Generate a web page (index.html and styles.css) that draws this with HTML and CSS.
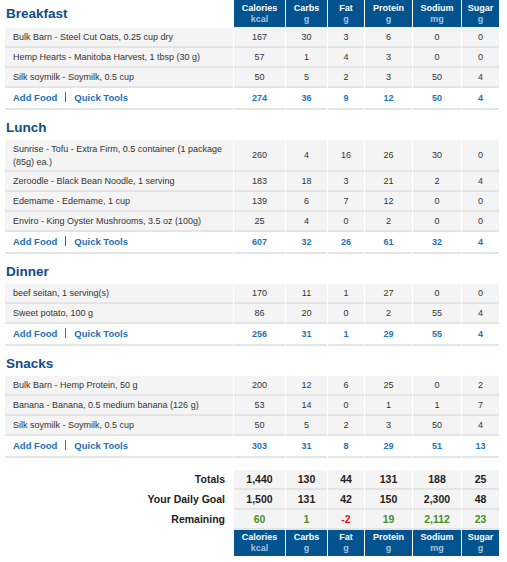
FILE: index.html
```html
<!DOCTYPE html>
<html>
<head>
<meta charset="utf-8">
<link rel="stylesheet" href="styles.css">
</head>
<body>
<table class="diary">
  <colgroup>
    <col class="c-name"><col class="c-cal"><col class="c-carb"><col class="c-fat"><col class="c-pro"><col class="c-sod"><col class="c-sug">
  </colgroup>
  <tbody>
    <tr class="head first">
      <th class="meal">Breakfast</th>
      <th class="col">Calories<span class="unit">kcal</span></th>
      <th class="col">Carbs<span class="unit">g</span></th>
      <th class="col">Fat<span class="unit">g</span></th>
      <th class="col">Protein<span class="unit">g</span></th>
      <th class="col">Sodium<span class="unit">mg</span></th>
      <th class="col">Sugar<span class="unit">g</span></th>
    </tr>
    <tr class="food"><td class="name">Bulk Barn - Steel Cut Oats, 0.25 cup dry</td><td>167</td><td>30</td><td>3</td><td>6</td><td>0</td><td>0</td></tr>
    <tr class="food"><td class="name">Hemp Hearts - Manitoba Harvest, 1 tbsp (30 g)</td><td>57</td><td>1</td><td>4</td><td>3</td><td>0</td><td>0</td></tr>
    <tr class="food"><td class="name">Silk soymilk - Soymilk, 0.5 cup</td><td>50</td><td>5</td><td>2</td><td>3</td><td>50</td><td>4</td></tr>
    <tr class="total"><td class="name"><a class="link">Add Food</a><span class="sep"></span><a class="link">Quick Tools</a></td><td>274</td><td>36</td><td>9</td><td>12</td><td>50</td><td>4</td></tr>

    <tr class="gap"><td colspan="7"></td></tr>
    <tr class="head">
      <th class="meal">Lunch</th><th></th><th></th><th></th><th></th><th></th><th></th>
    </tr>
    <tr class="food"><td class="name">Sunrise - Tofu - Extra Firm, 0.5 container (1 package (85g) ea.)</td><td>260</td><td>4</td><td>16</td><td>26</td><td>30</td><td>0</td></tr>
    <tr class="food"><td class="name">Zeroodle - Black Bean Noodle, 1 serving</td><td>183</td><td>18</td><td>3</td><td>21</td><td>2</td><td>4</td></tr>
    <tr class="food"><td class="name">Edemame - Edemame, 1 cup</td><td>139</td><td>6</td><td>7</td><td>12</td><td>0</td><td>0</td></tr>
    <tr class="food"><td class="name">Enviro - King Oyster Mushrooms, 3.5 oz (100g)</td><td>25</td><td>4</td><td>0</td><td>2</td><td>0</td><td>0</td></tr>
    <tr class="total"><td class="name"><a class="link">Add Food</a><span class="sep"></span><a class="link">Quick Tools</a></td><td>607</td><td>32</td><td>26</td><td>61</td><td>32</td><td>4</td></tr>

    <tr class="gap"><td colspan="7"></td></tr>
    <tr class="head">
      <th class="meal">Dinner</th><th></th><th></th><th></th><th></th><th></th><th></th>
    </tr>
    <tr class="food"><td class="name">beef seitan, 1 serving(s)</td><td>170</td><td>11</td><td>1</td><td>27</td><td>0</td><td>0</td></tr>
    <tr class="food"><td class="name">Sweet potato, 100 g</td><td>86</td><td>20</td><td>0</td><td>2</td><td>55</td><td>4</td></tr>
    <tr class="total"><td class="name"><a class="link">Add Food</a><span class="sep"></span><a class="link">Quick Tools</a></td><td>256</td><td>31</td><td>1</td><td>29</td><td>55</td><td>4</td></tr>

    <tr class="gap"><td colspan="7"></td></tr>
    <tr class="head">
      <th class="meal">Snacks</th><th></th><th></th><th></th><th></th><th></th><th></th>
    </tr>
    <tr class="food"><td class="name">Bulk Barn - Hemp Protein, 50 g</td><td>200</td><td>12</td><td>6</td><td>25</td><td>0</td><td>2</td></tr>
    <tr class="food"><td class="name">Banana - Banana, 0.5 medium banana (126 g)</td><td>53</td><td>14</td><td>0</td><td>1</td><td>1</td><td>7</td></tr>
    <tr class="food"><td class="name">Silk soymilk - Soymilk, 0.5 cup</td><td>50</td><td>5</td><td>2</td><td>3</td><td>50</td><td>4</td></tr>
    <tr class="total"><td class="name"><a class="link">Add Food</a><span class="sep"></span><a class="link">Quick Tools</a></td><td>303</td><td>31</td><td>8</td><td>29</td><td>51</td><td>13</td></tr>

    <tr class="gap big"><td colspan="7"></td></tr>
    <tr class="sum"><td class="label">Totals</td><td>1,440</td><td>130</td><td>44</td><td>131</td><td>188</td><td>25</td></tr>
    <tr class="sum"><td class="label">Your Daily Goal</td><td>1,500</td><td>131</td><td>42</td><td>150</td><td>2,300</td><td>48</td></tr>
    <tr class="sum remain"><td class="label">Remaining</td><td class="pos">60</td><td class="pos">1</td><td class="neg">-2</td><td class="pos">19</td><td class="pos">2,112</td><td class="pos">23</td></tr>
    <tr class="head bottom">
      <th class="meal"></th>
      <th class="col">Calories<span class="unit">kcal</span></th>
      <th class="col">Carbs<span class="unit">g</span></th>
      <th class="col">Fat<span class="unit">g</span></th>
      <th class="col">Protein<span class="unit">g</span></th>
      <th class="col">Sodium<span class="unit">mg</span></th>
      <th class="col">Sugar<span class="unit">g</span></th>
    </tr>
  </tbody>
</table>
</body>
</html>
```

FILE: styles.css
```css
html, body {
  margin: 0;
  padding: 0;
  background: #ffffff;
  font-family: "Liberation Sans", Arial, sans-serif;
}

.diary {
  border-collapse: separate;
  border-spacing: 1px 0;
  table-layout: fixed;
  width: 496px;
  margin-left: 4px;
}

.c-name { width: 228px; }
.c-cal { width: 51px; }
.c-carb { width: 41px; }
.c-fat { width: 36px; }
.c-pro { width: 47px; }
.c-sod { width: 48px; }
.c-sug { width: 37px; }

.head th {
  padding: 0;
  height: 26px;
  line-height: 15px;
  background: #ffffff;
}

.head .meal {
  text-align: left;
  padding: 0 1px;
  font-size: 13.5px;
  font-weight: bold;
  color: #0f4c85;
  vertical-align: middle;
}

.head .col {
  background: #03538f;
  color: #ffffff;
  font-size: 9px;
  font-weight: bold;
  line-height: 11px;
  padding: 3px 0 2px;
  height: auto;
  text-align: center;
  vertical-align: top;
}

.first .meal {
  height: 27px;
}

.first .col,
.first .meal {
  border-bottom: 1px solid #ffffff;
}

.bottom .col {
  padding: 2px 0 2px;
}

.bottom .meal {
  height: 22px;
}

.unit {
  display: block;
  color: #a7c3df;
}

.food td,
.total td,
.sum td {
  font-size: 9px;
  line-height: 13px;
  padding: 3px 8px 2px;
  color: #333333;
  text-align: center;
  background: #f4f4f4;
  border-bottom: 2px solid #e4e4e4;
}

.food td.name {
  text-align: left;
  line-height: 12.5px;
}

.total td {
  background: #ffffff;
  color: #1f74b6;
  font-weight: bold;
  padding: 3px 8px 3px;
}

.total td.name {
  text-align: left;
}

.link {
  color: #1f6fb5;
  font-size: 9.5px;
  font-weight: bold;
}

.sep {
  display: inline-block;
  width: 0;
  height: 10px;
  border-left: 1px solid #1f6fb5;
  margin: 0 8px;
  vertical-align: -1px;
}

.gap td {
  height: 4px;
  padding: 0;
  border: 0;
}

.gap.big td {
  height: 12px;
}

.sum td {
  font-size: 10.5px;
  font-weight: bold;
  color: #222222;
  padding: 3px 0 2px;
}

.sum td.label {
  background: #ffffff;
  border-bottom-color: #ffffff;
  text-align: right;
  padding-right: 8px;
}

.sum .pos {
  color: #4a8f1c;
}

.sum .neg {
  color: #e8121b;
}
```
